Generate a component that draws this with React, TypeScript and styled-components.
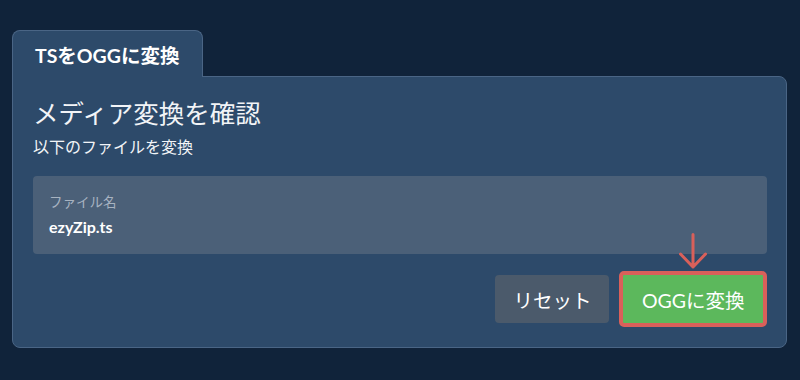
import { createGlobalStyle } from 'styled-components';
import styled from 'styled-components';

const GlobalStyle = createGlobalStyle`
   html, body {
      margin: 0;
      padding: 0;
      background: #10233a;
   }
   body {
      font-family: Lato, "Noto Sans CJK JP", sans-serif;
      color: #ffffff;
   }
`;

const Page = styled.div`
   width: 800px;
   height: 380px;
   box-sizing: border-box;
   padding: 30px 13px 0 12px;
`;

const Tab = styled.div`
   position: relative;
   z-index: 1;
   display: inline-flex;
   align-items: center;
   height: 47px;
   box-sizing: border-box;
   padding: 0 23px 0 22px;
   margin-bottom: -1px;
   background: #2d4a6a;
   border: 1px solid #4a6585;
   border-bottom: none;
   border-radius: 8px 8px 0 0;
   font-size: 19.5px;
   font-weight: 700;
`;

const Panel = styled.div`
   background: #2d4a6a;
   border: 1px solid #4a6585;
   border-radius: 0 8px 8px 8px;
   padding: 19px 19px 20px 20px;
`;

const Title = styled.h2`
   margin: 0;
   font-size: 25.5px;
   font-weight: 400;
   line-height: 34px;
   color: #f2f4f7;
`;

const Subtitle = styled.p`
   margin: 6px 0 0;
   font-size: 16px;
   line-height: 22px;
   color: #f2f4f7;
`;

const Field = styled.div`
   margin-top: 18px;
   height: 78px;
   box-sizing: border-box;
   background: #4b6078;
   border-radius: 4px;
   padding: 17px 16px 0;
`;

const Label = styled.div`
   font-size: 13.5px;
   line-height: 18px;
   color: #a7b3c1;
`;

const Value = styled.div`
   margin-top: 6px;
   font-size: 16px;
   font-weight: 700;
   line-height: 20px;
`;

const Actions = styled.div`
   display: flex;
   justify-content: flex-end;
   align-items: center;
   gap: 10px;
   margin-top: 17px;
`;

const Button = styled.button<{ $primary?: boolean }>`
   position: relative;
   font-family: Lato, "Noto Sans CJK JP", sans-serif;
   font-size: 19.5px;
   color: #ffffff;
   border-radius: 4px;
   cursor: pointer;
   box-sizing: border-box;
   ${(props) =>
      props.$primary
         ? `
            height: 56px;
            padding: 0 18.5px;
            background: #5cb85c;
            border: 4px solid #d9605a;
            border-radius: 5px;
         `
         : `
            height: 48px;
            padding: 0 18px;
            background: #4b5a6b;
            border: none;
         `}
`;

const Arrow = styled.svg`
   position: absolute;
   left: 50%;
   top: -42px;
   margin-left: -14px;
   width: 28px;
   height: 37px;
`;

export default function App() {
   return (
      <>
         <GlobalStyle />
         <Page>
            <Tab>TSをOGGに変換</Tab>
            <Panel>
               <Title>メディア変換を確認</Title>
               <Subtitle>以下のファイルを変換</Subtitle>
               <Field>
                  <Label>ファイル名</Label>
                  <Value>ezyZip.ts</Value>
               </Field>
               <Actions>
                  <Button>リセット</Button>
                  <Button $primary>
                     OGGに変換
                     <Arrow viewBox="0 0 28 37" fill="none">
                        <path
                           d="M14 1.5 V34 M1.5 21 L14 34 L26.5 21"
                           stroke="#d9605a"
                           strokeWidth="3"
                           strokeLinecap="round"
                           strokeLinejoin="round"
                        />
                     </Arrow>
                  </Button>
               </Actions>
            </Panel>
         </Page>
      </>
   );
}
